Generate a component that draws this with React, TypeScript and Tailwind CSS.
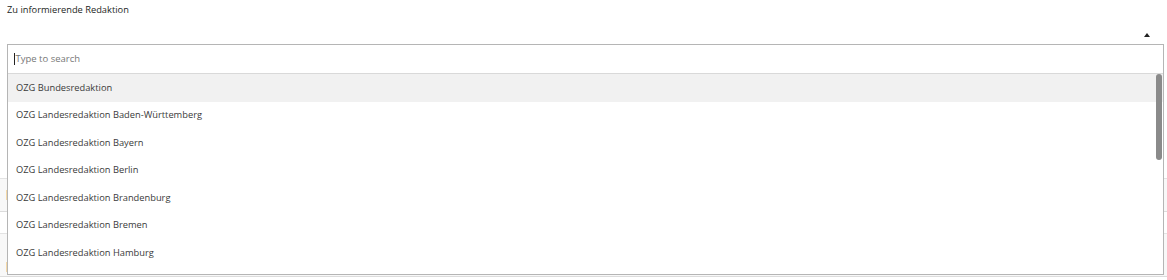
import React from "react";

const options = [
  "OZG Bundesredaktion",
  "OZG Landesredaktion Baden-Württemberg",
  "OZG Landesredaktion Bayern",
  "OZG Landesredaktion Berlin",
  "OZG Landesredaktion Brandenburg",
  "OZG Landesredaktion Bremen",
  "OZG Landesredaktion Hamburg",
];

export default function App() {
  return (
    <div className="relative h-[280px] w-[1167px] overflow-hidden bg-white font-['Open_Sans',sans-serif] text-[#3a3a3a]">
      {/* label + select head */}
      <div className="px-[7px] pt-[3px]">
        <div className="text-[9.3px] font-medium leading-[14px] text-[#1c261c]">Zu informierende Redaktion</div>
        <div className="flex h-[27px] items-center justify-end pr-[10px] pt-[8px]">
          <span className="h-0 w-0 border-x-[3.5px] border-b-[4px] border-x-transparent border-b-[#222]" />
        </div>
      </div>

      {/* content behind the open list */}
      <div className="mt-[133px] flex flex-col">
        <div className="h-[2px] border-b border-[#e3e3e3]" />
        <div className="flex h-[33px] items-center border-b border-[#dcdcdc] bg-[#f8f8f8] pl-[6px]">
          <span className="h-[10px] w-[2px] bg-[#f5d9a8]" />
        </div>
        <div className="h-[22px] border-b border-[#e3e3e3]" />
        <div className="flex h-[43px] items-center border-b border-[#dcdcdc] bg-[#f8f8f8] pl-[6px] pt-[24px]">
          <span className="h-[10px] w-[2px] bg-[#f5d9a8]" />
        </div>
      </div>

      {/* dropdown */}
      <div className="absolute left-[7px] top-[44px] h-[231px] w-[1157px] border border-[#b5b5b5] bg-white">
        <div className="flex h-[29px] items-center border-b border-[#d9d9d9] pl-[6px] text-[9.5px] text-[#777]">
          <span className="mr-[0.5px] h-[12px] w-px bg-[#222]" />
          Type to search
        </div>
        <div className="relative">
          {options.map((o, i) => (
            <div
              key={o}
              className={`flex h-[27.5px] items-center pl-[8px] text-[9.3px] ${i === 0 ? "bg-[#f1f1f1]" : ""}`}
            >
              {o}
            </div>
          ))}
          <div className="absolute right-[1px] top-0 h-[86px] w-[6px] rounded-[3px] bg-[#8a8a8a]" />
        </div>
      </div>
    </div>
  );
}
